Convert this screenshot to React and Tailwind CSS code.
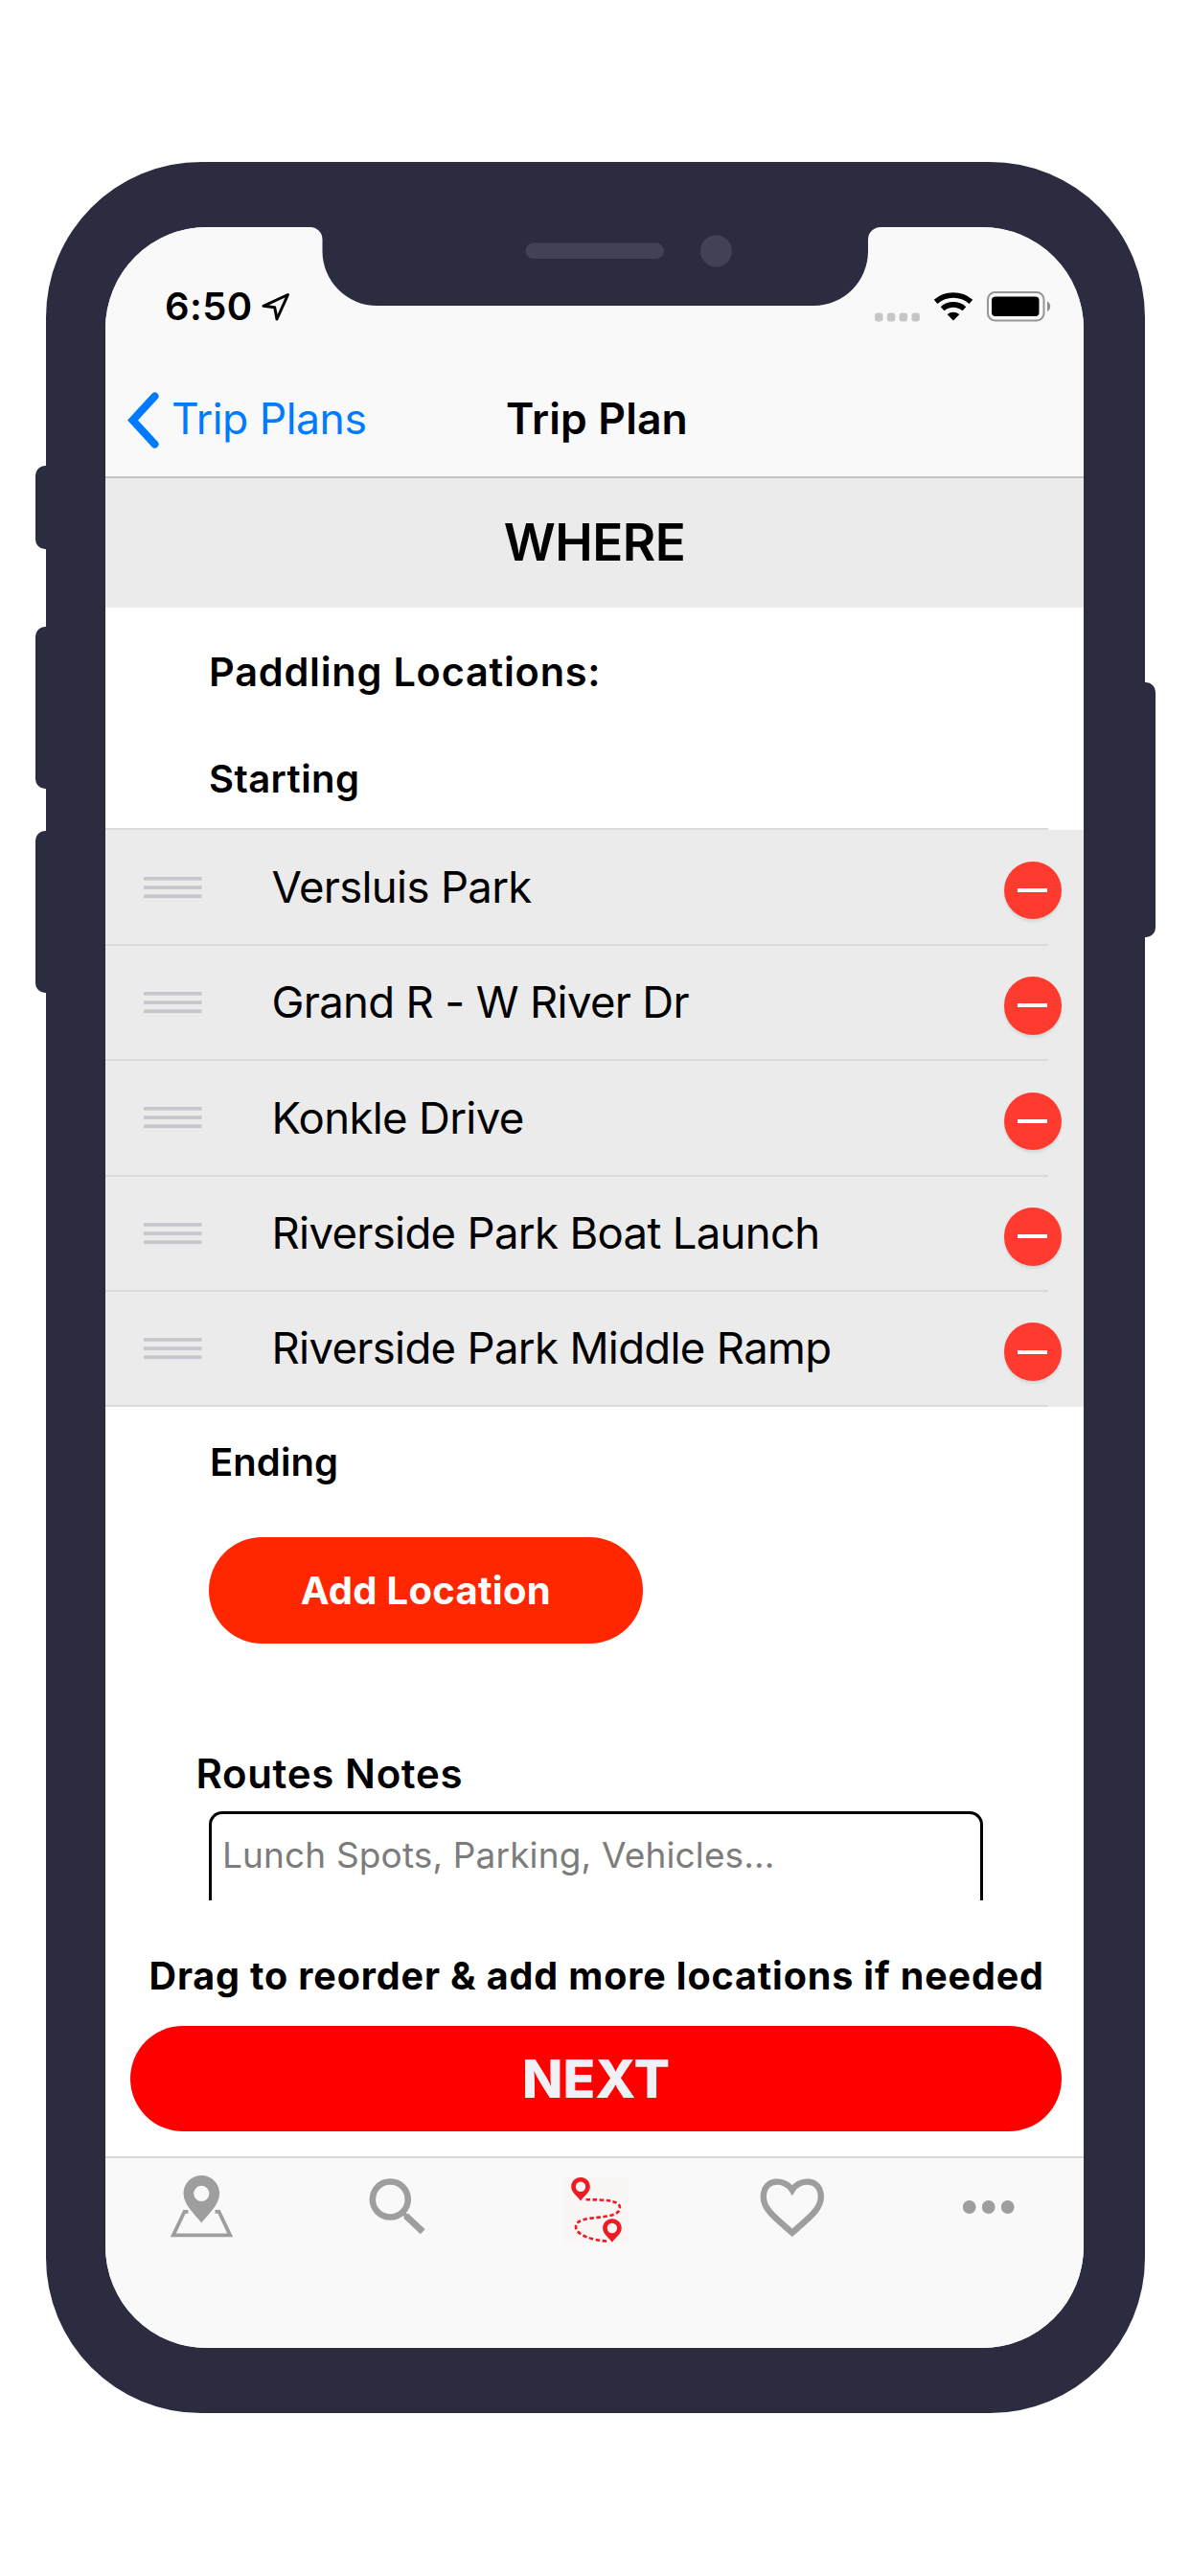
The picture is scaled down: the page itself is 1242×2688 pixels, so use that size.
const locations = [
  "Versluis Park",
  "Grand R - W River Dr",
  "Konkle Drive",
  "Riverside Park Boat Launch",
  "Riverside Park Middle Ramp",
];

const Notch = () => (
  <svg className="absolute left-[214px] top-0" width="595" height="83" viewBox="0 0 595 83" fill="none">
    <path
      d="M0 -2V0A12.500 13 0 0 1 12.500 13V25A57 57 0 0 0 69.500 82H525.500A57 57 0 0 0 582 25V13A13 13 0 0 1 595 0V-2Z"
      fill="#2c2c40"
    />
    <rect x="224.500" y="16.500" width="144.500" height="16.500" rx="8.250" fill="#424155" />
    <circle cx="423.500" cy="25" r="16.500" fill="#424155" />
  </svg>
);

const StatusBar = () => (
  <div className="flex h-[166px] items-center justify-between pl-[62px] pr-[34px]">
    <div className="flex items-center">
      <span className="text-[40px] font-semibold tracking-[0.4px]">6:50</span>
      <svg className="ml-[9px]" width="32" height="32" viewBox="0 0 32 32" fill="none">
        <path
          d="M28.500 3.500L3 15.300L14.700 16.800L17 29Z"
          stroke="black"
          strokeWidth="3"
          strokeLinejoin="round"
        />
      </svg>
    </div>
    <div className="flex items-center">
      <svg className="mr-[14px]" width="47" height="32" viewBox="0 0 47 32" fill="#c6c6c6">
        <rect x="0" y="22.500" width="8.500" height="9" rx="3" />
        <rect x="12.800" y="22.500" width="8.500" height="9" rx="3" />
        <rect x="25.600" y="22.500" width="8.500" height="9" rx="3" />
        <rect x="38.400" y="22.500" width="8.500" height="9" rx="3" />
      </svg>
      <svg className="mr-[14px]" width="42" height="32" viewBox="0 0 42 32" fill="none">
        <path d="M2.600 10.800C13.200 1.800 28.800 1.800 39.400 10.800" stroke="black" strokeWidth="5.600" />
        <path d="M9.600 18.200C16 12.400 26 12.400 32.400 18.200" stroke="black" strokeWidth="5.600" />
        <path d="M14.600 24.100C18.200 20.800 23.800 20.800 27.400 24.100L21 30.500Z" fill="black" />
      </svg>
      <svg width="67" height="32" viewBox="0 0 67 32" fill="none">
        <rect x="1" y="1" width="58.500" height="29.500" rx="7.500" stroke="#959595" strokeWidth="2" />
        <rect x="5" y="5.500" width="49.500" height="20.500" rx="4" fill="black" />
        <path d="M63 10.500C67.300 12.500 67.300 19 63 21Z" fill="#8e8e8e" />
      </svg>
    </div>
  </div>
);

const NavBar = () => (
  <div className="flex h-[96px] border-b-2 border-[#c4c4c5] pb-[25px]">
    <div className="flex w-[415px] items-center pl-[23px] text-[#007aff]">
      <svg width="34" height="60" viewBox="0 0 34 60" fill="none">
        <path
          d="M28.500 5.500L5.500 30.500L28.500 55.500"
          stroke="currentColor"
          strokeWidth="8"
          strokeLinecap="round"
          strokeLinejoin="miter"
        />
      </svg>
      <span className="ml-3 text-[44.5px] tracking-[-0.47px]">Trip Plans</span>
    </div>
    <h1 className="flex items-center pl-[3px] text-[44.5px] font-semibold tracking-[0.14px]">Trip Plan</h1>
  </div>
);

const LocationRow = ({ name }) => (
  <li>
    <div className="flex h-[118.4px] items-center bg-[#ebebeb] pl-[39.500px] pr-[23px]">
      <svg width="61" height="24" viewBox="0 0 61 24" fill="#c6c6cc">
        <rect y="1" width="60.500" height="3.700" />
        <rect y="10.200" width="60.500" height="3.700" />
        <rect y="19.400" width="60.500" height="3.700" />
      </svg>
      <span className="ml-[73px] text-[45.5px] tracking-[-0.68px]">{name}</span>
      <button className="mt-[7px] ml-auto flex size-[60.5px] items-center justify-center rounded-full bg-[#ff3b30] shadow-[0_3px_2px_rgba(200,210,210,0.6)]">
        <span className="h-[4px] w-[31px] bg-white" />
      </button>
    </div>
    <div className="bg-[#ebebeb]">
      <div className="mr-[37px] h-[2px] bg-[#dadadb]" />
    </div>
  </li>
);

const TabBar = () => (
  <div className="flex h-[200px] border-t-2 border-[#d8d8d8] bg-[#f9f9f9] pt-3">
    <div className="flex flex-1 justify-center">
      {/* Map */}
      <svg width="80" height="80" viewBox="172 2264 80 80" fill="none">
        <path
          d="M196.500 2307.800H192.500L180.800 2332.400H240.200L228.500 2307.800H224.500"
          stroke="#9e9e9e"
          strokeWidth="3.800"
        />
        <path
          fillRule="evenodd"
          d="M210.300 2270C199.800 2270 191.500 2278.300 191.500 2288.700C191.500 2301 204 2311 210.300 2319.500C216.600 2311 229.100 2301 229.100 2288.700C229.100 2278.300 220.800 2270 210.300 2270ZM210.300 2280.800A8.100 8.100 0 1 1 210.300 2297A8.100 8.100 0 1 1 210.300 2280.800Z"
          fill="#9e9e9e"
        />
      </svg>
    </div>
    <div className="flex flex-1 justify-center">
      {/* Search */}
      <svg width="80" height="80" viewBox="376.300 2264 80 80" fill="none" stroke="#9e9e9e">
        <circle cx="407.600" cy="2295" r="18.500" strokeWidth="6.500" />
        <path d="M423.800 2312L441.500 2328.800" strokeWidth="7" />
        <path d="M419 2307L425 2313" strokeWidth="4" />
      </svg>
    </div>
    <div className="flex flex-1 justify-center">
      {/* Trip plans */}
      <svg width="80" height="80" viewBox="580.500 2264 80 80" fill="none">
        <rect x="588" y="2271.700" width="67.600" height="69" fill="#faf6f6" />
        <path
          d="M611 2295.300C628 2295.300 646.500 2295.500 646.500 2303.500C646.500 2319 600.500 2309 600.500 2323.500C600.500 2332.500 618 2337.500 634 2338.800"
          stroke="#ed1c24"
          strokeWidth="2.600"
          strokeDasharray="4.500 2.500"
        />
        <path
          id="pin"
          fillRule="evenodd"
          d="M605.500 2272C600 2272 595.700 2276.400 595.700 2281.800C595.700 2288 602 2291.500 605.500 2296.500C609 2291.500 615.300 2288 615.300 2281.800C615.300 2276.400 611 2272 605.500 2272ZM605.500 2276.600A5.200 5.200 0 1 1 605.500 2287A5.200 5.200 0 1 1 605.500 2276.600Z"
          fill="#ed1c24"
        />
        <use href="#pin" x="32.900" y="43.200" />
      </svg>
    </div>
    <div className="flex flex-1 justify-center">
      {/* Favorites */}
      <svg width="80" height="80" viewBox="784.700 2264 80 80" fill="none">
        <path
          d="M826.500 2285.200C819 2273 796.500 2272.500 796.500 2292.500C796.500 2305 808 2313.500 826.500 2329.800C845 2313.500 856.500 2305 856.500 2292.500C856.500 2272.500 834 2273 826.500 2285.200Z"
          stroke="#9e9e9e"
          strokeWidth="6.400"
        />
      </svg>
    </div>
    <div className="flex flex-1 justify-center">
      {/* More */}
      <svg width="80" height="80" viewBox="989 2264 80 80" fill="#9e9e9e">
        <circle cx="1011.700" cy="2303" r="6.900" />
        <circle cx="1031.700" cy="2303" r="6.900" />
        <circle cx="1051.700" cy="2303" r="6.900" />
      </svg>
    </div>
  </div>
);

const App = () => {
  return (
    <div className="h-[2688px] w-[1242px] bg-white pt-[169px] font-['Inter',sans-serif] leading-none text-black">
      <div className="relative mx-auto h-[2349px] w-[1147px] rounded-[162px] bg-[#2c2c40] pt-[68px] pr-[63.5px] pl-[62.5px]">
        {/* Side buttons */}
        <div className="absolute top-[317px] -left-[11px] h-[86.500px] w-[24px] rounded-[10px] bg-[#2c2c40]" />
        <div className="absolute top-[485px] -left-[11px] h-[169px] w-[24px] rounded-[10px] bg-[#2c2c40]" />
        <div className="absolute top-[698px] -left-[11px] h-[169px] w-[24px] rounded-[10px] bg-[#2c2c40]" />
        <div className="absolute top-[543px] -right-[11px] h-[266px] w-[24px] rounded-[10px] bg-[#2c2c40]" />

        <div className="relative flex h-[2213px] flex-col overflow-hidden rounded-[106px] bg-white">
          <Notch />
          <div className="bg-[#f9f9f9]">
            <StatusBar />
            <NavBar />
          </div>

          <h2 className="flex h-[135px] items-center justify-center bg-[#ebebeb] text-[53px] font-semibold tracking-[-0.56px]">
            WHERE
          </h2>

          <div className="h-[230.4px] pl-[108px]">
            <h3 className="flex h-[136px] items-center text-[41.5px] font-semibold tracking-[0.76px]">
              Paddling Locations:
            </h3>
            <h3 className="flex h-[86px] items-center text-[40px] font-semibold tracking-[0.43px]">Starting</h3>
          </div>

          <div className="mr-[37px] h-[2px] shrink-0 bg-[#dadadb]" />
          <ul>
            {locations.map((name) => (
              <LocationRow key={name} name={name} />
            ))}
          </ul>

          <h3 className="flex h-[115px] items-center pl-[109px] text-[40px] font-semibold tracking-[0.08px]">Ending</h3>
          <button className="mt-[21px] ml-[108px] h-[110.5px] w-[452.5px] rounded-full bg-[#ff2600] text-[40px] font-bold tracking-[0.26px] text-white">
            Add Location
          </button>

          <div className="mt-[97px] pr-[105.5px] pl-[94.500px]">
            <h3 className="flex h-[78px] items-center text-[42px] font-semibold tracking-[0.65px]">Routes Notes</h3>
            <div className="ml-[13.5px] flex h-[93px] items-center rounded-t-[14px] border-x-3 border-t-3 border-black pl-[11px] text-[37px] tracking-[0.14px] text-[#7c7c7c]">
              <span className="pb-[5px]">Lunch Spots, Parking, Vehicles...</span>
            </div>
          </div>

          <p className="mt-[29px] flex h-[102px] items-center pl-[45.500px] text-[39.5px] font-bold tracking-[0.86px] whitespace-nowrap">
            Drag to reorder &amp; add more locations if needed
          </p>
          <button className="mr-[23px] ml-[26px] h-[110px] rounded-full bg-[#ff0000] text-[55.5px] font-extrabold text-[#f0f1f7]">
            NEXT
          </button>

          <div className="mt-auto">
            <TabBar />
          </div>
        </div>
      </div>
    </div>
  );
};

export default App;
